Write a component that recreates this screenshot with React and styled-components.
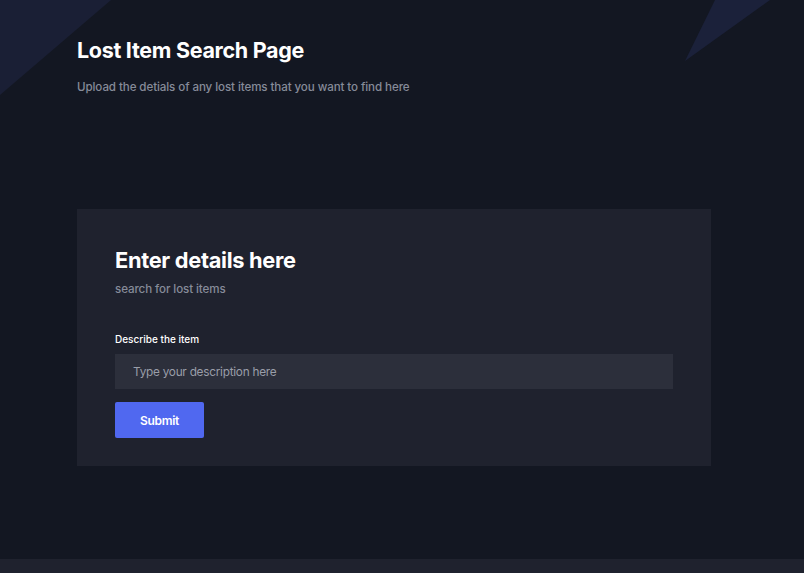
import styled, { createGlobalStyle } from "styled-components";

const GlobalStyle = createGlobalStyle`
	html, body {
		margin: 0;
		padding: 0;
		background: #131722;
		font-family: Inter, "Noto Sans", sans-serif;
	}
`;

// Styled Components
const Page = styled.div`
	position: relative;
	min-height: 573px;
	overflow: hidden;
	display: flex;
	flex-direction: column;
	background: #131722;
`;

const Wedge = styled.svg`
	position: absolute;
	top: 0;
	left: ${(p) => (p.$right ? "auto" : "0")};
	right: ${(p) => (p.$right ? "0" : "auto")};
`;

const Main = styled.main`
	flex: 1;
	padding: 36px 93px 93px 77px;
	position: relative;
`;

const Header = styled.header`
	margin-bottom: 114px;
`;

const Title = styled.h1`
	margin: 0;
	font-size: 21.5px;
	line-height: 28px;
	font-weight: 700;
	color: #ffffff;
	letter-spacing: -0.3px;
`;

const Subtitle = styled.p`
	margin: 15px 0 0;
	font-size: 11.6px;
	line-height: 16px;
	font-weight: 500;
	color: #868b99;
	letter-spacing: -0.1px;
`;

const Card = styled.section`
	background: #1f222e;
	padding: 37px 38px 28px;
	max-width: 558px;
`;

const CardTitle = styled.h2`
	margin: 0;
	font-size: 21.8px;
	line-height: 28px;
	font-weight: 700;
	color: #ffffff;
	letter-spacing: -0.3px;
`;

const CardSub = styled.p`
	margin: 7px 0 0;
	font-size: 11.6px;
	line-height: 16px;
	font-weight: 500;
	color: #868b99;
	letter-spacing: -0.1px;
`;

const Form = styled.form`
	margin-top: 35px;
	display: flex;
	flex-direction: column;
	align-items: flex-start;
`;

const Label = styled.label`
	font-size: 10px;
	line-height: 14px;
	font-weight: 500;
	color: #ffffff;
`;

const Input = styled.input`
	box-sizing: border-box;
	margin-top: 8px;
	width: 100%;
	height: 35px;
	border: none;
	outline: none;
	background: #2c2f3b;
	padding: 0 18px;
	font-family: inherit;
	font-size: 11.8px;
	letter-spacing: -0.25px;
	color: #ffffff;

	&::placeholder {
		color: #9a9ea9;
	}
`;

const Button = styled.button`
	margin-top: 13px;
	width: 89px;
	height: 36px;
	border: none;
	border-radius: 2px;
	background: #5068f0;
	color: #ffffff;
	font-family: inherit;
	font-size: 12px;
	font-weight: 600;
	letter-spacing: -0.3px;
	cursor: pointer;
`;

const Footer = styled.footer`
	height: 14px;
	background: #1f222e;
`;

const App = () => {
	return (
		<>
			<GlobalStyle />
			<Page>
				<Wedge width="112" height="96" viewBox="0 0 112 96">
					<polygon points="0,0 111,0 0,95" fill="#1a1f35" />
				</Wedge>
				<Wedge $right width="120" height="62" viewBox="0 0 120 62">
					<polygon points="31,0 86,0 1,61" fill="#1b213a" />
				</Wedge>
				<Main>
					<Header>
						<Title>Lost Item Search Page</Title>
						<Subtitle>
							Upload the detials of any lost items that you want to find here
						</Subtitle>
					</Header>
					<Card>
						<CardTitle>Enter details here</CardTitle>
						<CardSub>search for lost items</CardSub>
						<Form onSubmit={(e) => e.preventDefault()}>
							<Label htmlFor="desc">Describe the item</Label>
							<Input id="desc" placeholder="Type your description here" />
							<Button type="submit">Submit</Button>
						</Form>
					</Card>
				</Main>
				<Footer />
			</Page>
		</>
	);
};

export default App;
